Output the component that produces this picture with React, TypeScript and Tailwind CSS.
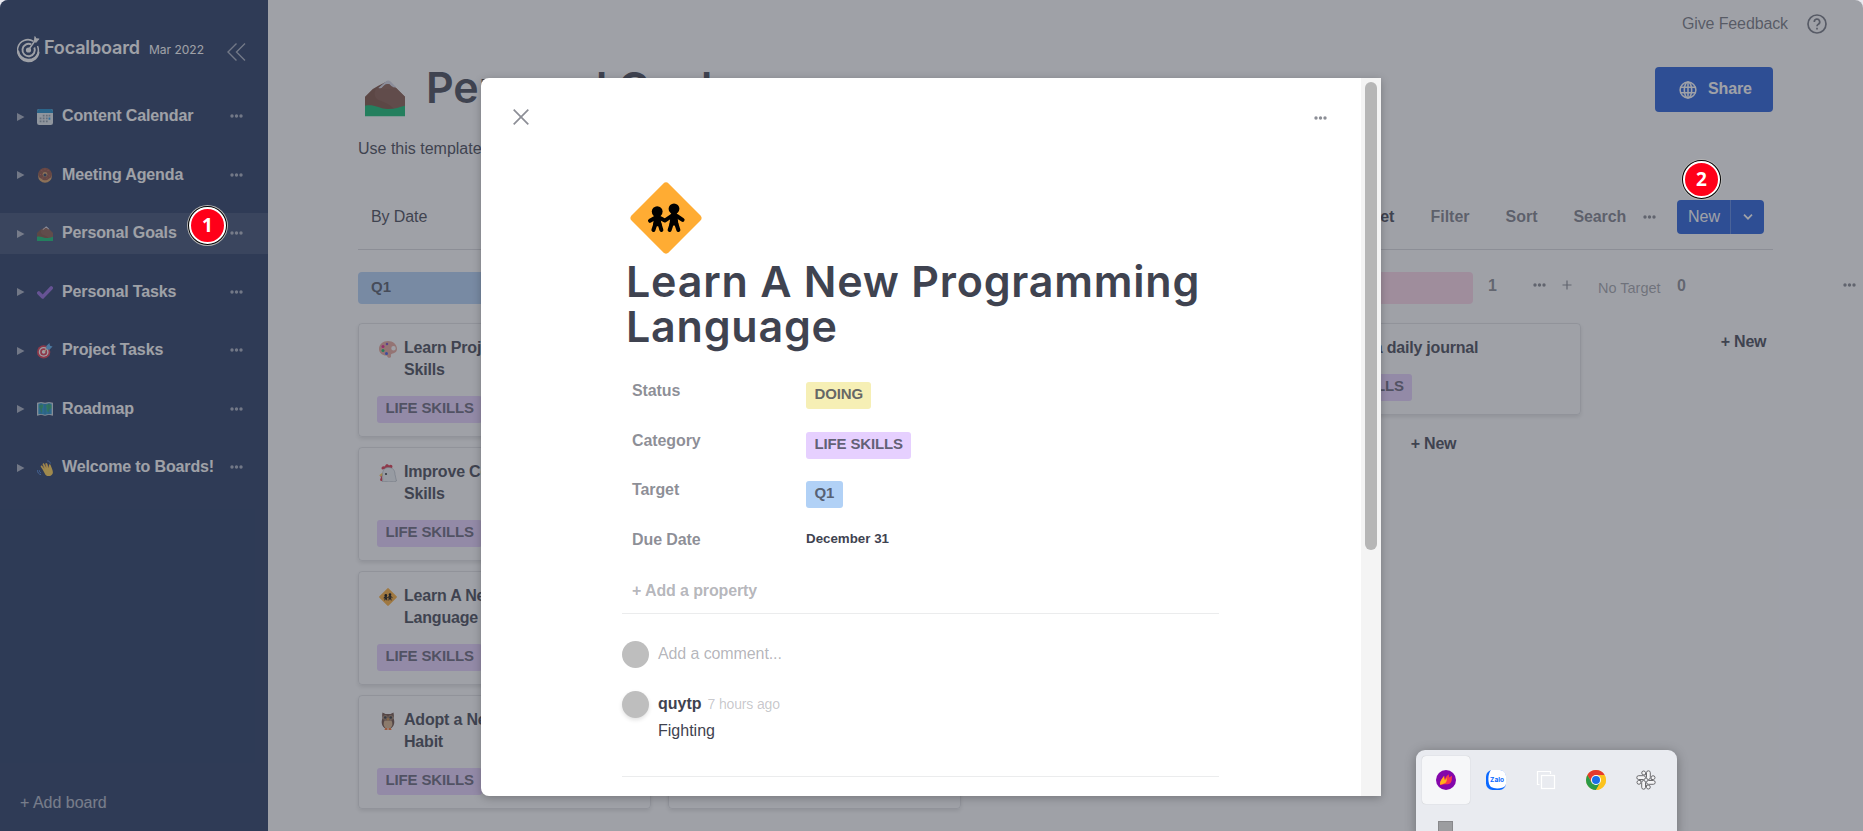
import React from "react";

const people = (
  <g fill="#000" stroke="#000" strokeLinecap="round" strokeLinejoin="round">
    <circle cx="13.600" cy="14.800" r="2.700" stroke="none" />
    <circle cx="22" cy="13.400" r="2.700" stroke="none" />
    <path d="M12.600 17h2l.7 4.600h-3.300z" strokeWidth="1" />
    <path d="M20.900 16h2.200l.6 5.200h-3.500z" strokeWidth="1" />
    <path
      d="M10 19.400l2.600-1.500M15 18l2.400 1.300 3.300-2.200M23.400 17l2.900 1.900M12.700 21l-1 3M14.800 21l.9 3M20.800 21l-1 3M23.200 21l1 3"
      strokeWidth="2"
      fill="none"
    />
  </g>
);

function Emoji({ name, className }: { name: string; className: string }) {
  const art: Record<string, React.ReactNode> = {
    calendar: (
      <>
        <rect width="36" height="36" rx="5" fill="#e1e8ed" />
        <path d="M5 0h26a5 5 0 0 1 5 5v4H0V5a5 5 0 0 1 5-5z" fill="#1787c4" />
        <g fill="#8899a6">
          <path d="M13 13h4v4h-4zM20 13h4v4h-4zM26 13h4v4h-4zM6 19h4v4H6zM13 19h4v4h-4zM20 19h4v4h-4zM6 26h4v4H6zM13 26h4v4h-4zM20 26h4v4h-4z" />
        </g>
        <path d="M26 19h4v5h-4z" fill="#1f97e0" />
      </>
    ),
    donut: (
      <>
        <ellipse cx="18" cy="20" rx="15.500" ry="15.500" fill="#d99e60" />
        <path
          d="M18 1.500a15.500 15.500 0 0 1 15.500 15.500c0 5-3 8-6 9-3 3-6 4-9 4s-7-1-9-4c-4-1-7-5-7-9A15.500 15.500 0 0 1 18 1.500z"
          fill="#8a4b38"
        />
        <circle cx="18" cy="17" r="5.500" fill="#d99e60" />
        <circle cx="18" cy="18" r="3.500" fill="#1e325c" />
        <path d="M10 8l2 1M24 7l2 2M7 17h2M27 19l1 2M12 25l2-1M22 26l1-2M17 5h2" stroke="#e8596e" strokeWidth="1.500" />
      </>
    ),
    mountain: (
      <>
        <path d="M0 16l7-7 5-3 8-4 5 5 3 1 8 8v13H0z" fill="#794b3b" />
        <path d="M10 9c5-3 11-3 17-2l9 9v12H27c-4-5-9-7-15-9-4-3-4-7-2-10z" fill="#87594b" opacity=".7" />
        <path d="M12 8l7-6c1-1 3-.8 4 .2L28 7.500c-2-.4-4 .2-5-1.500-1-2-3-1.500-5 0-2 1.500-3 3-6 2z" fill="#d6d6e4" />
        <path d="M15 8c2-2 3-4 6-3.500 2 .5 2 2 4 2.500v2H15z" fill="#87594b" />
        <path d="M0 24c8-1.500 12 2 18 2.800 7 1 12-1.300 18-2.800v9.500H0z" fill="#08ba6c" />
      </>
    ),
    check: (
      <path d="M4 20l9 9L32 9" fill="none" stroke="#8d63d8" strokeWidth="8" strokeLinecap="round" strokeLinejoin="round" />
    ),
    target: (
      <>
        <circle cx="15" cy="20" r="15" fill="#dd2e44" />
        <circle cx="15" cy="20" r="11" fill="#fff" />
        <circle cx="15" cy="20" r="8" fill="#dd2e44" />
        <circle cx="15" cy="20" r="4" fill="#fff" />
        <path d="M15 20L29 6" stroke="#ffe8b6" strokeWidth="2.500" />
        <path d="M21 14V7l7-7 1 6 6 2-7 7z" fill="#55acee" />
      </>
    ),
    map: (
      <>
        <path d="M0 4l9-2 9 2 9-2 9 2v29l-9-2-9 2-9-2-9 2z" fill="#ccd6dd" />
        <path d="M3 6l6-1 9 2 9-2 6 1v24l-6-1-9 2-9-2-6 1z" fill="#1b8ec8" />
        <path d="M6 9l8-1-1 7-3 3 2 4-2 5-3-9-2-4zM20 10l6-3 6 2v8l-4 1-2 7-4-2v-7z" fill="#23a866" />
        <path d="M9 4v25M18 6v25M27 4v25" stroke="#12688f" strokeWidth="1" />
      </>
    ),
    wave: (
      <>
        <path
          d="M9 20L4.500 13c-1-2 1.500-4 3-2l5 6L9 8c-.8-2.500 2-3.500 3-1.500l5 9-2-9c-.5-2 2.500-3 3.500-.7l4 10.200.5-7c.2-2.300 3.300-2 3.500 0l3.500 9c2 6 3 10-1 14-4.500 4-11 3-14-1z"
          fill="#ffcf4a"
          transform="translate(4 2)"
        />
        <path
          d="M12.500 17L9 8M17 15.500l-2-9M22.500 16l-4-10"
          fill="none"
          stroke="#ef9645"
          strokeWidth="1"
          transform="translate(4 2)"
        />
        <path d="M1 23c0 5 3 9 8 10M5 23c0 3 2 5 4 6M23 2c4 0 6 2 7 6" fill="none" stroke="#4a86e0" strokeWidth="2.200" />
      </>
    ),
    sign: (
      <>
        <rect x="4.900" y="4.900" width="26.200" height="26.200" rx="2" fill="#ffac33" transform="rotate(45 18 18)" />
        {people}
      </>
    ),
    palette: (
      <>
        <path
          d="M18 2C8 2 0 9 0 18c0 8 7 13 14 13 3 0 2 2 4 4 2 1 6 1 6-2s-1-4 1-5 11-2 11-10C36 9 28 2 18 2zm11 19a4.500 4.500 0 1 1 0-9 4.500 4.500 0 0 1 0 9z"
          fill="#e8a598"
          fillRule="evenodd"
        />
        <circle cx="8" cy="13" r="3" fill="#e8178c" />
        <circle cx="16" cy="8" r="2.500" fill="#7a3fc0" />
        <circle cx="8" cy="21" r="3" fill="#14b866" />
        <circle cx="15" cy="27" r="3" fill="#3b56e8" />
      </>
    ),
    chicken: (
      <>
        <path d="M6 11c-3-4 1-8 6-6 1-6 6-5 8-2 4-4 9 0 6 5z" fill="#dd2e44" />
        <path d="M5 22c-3 1-3 3-1 4l-2 6c1 3 5 3 5 0z" fill="#dd2e44" />
        <path d="M0 23l7-6 2 8z" fill="#ffcc4d" />
        <path d="M7 20C8 9 14 7 19 7c9 0 13 6 13 14l3 13-5 2-5-1-5 1-6-1-7 1c1-7 0-10 0-16z" fill="#eef2f5" stroke="#a5adb6" strokeWidth="1.200" />
        <circle cx="14" cy="20" r="2.200" fill="#292f33" />
      </>
    ),
    owl: (
      <>
        <path d="M7 1l6 3h10l6-3c1 6 1 8 0 11 3 8 2 15-4 20H11C5 27 4 20 7 12 6 8 6 5 7 1z" fill="#6b4b3e" />
        <path d="M11 17h14c3 6 2 12-2 15H13c-4-3-5-9-2-15z" fill="#d9b389" />
        <circle cx="12.500" cy="11" r="5" fill="#9c7c62" />
        <circle cx="23.500" cy="11" r="5" fill="#9c7c62" />
        <circle cx="12.500" cy="11" r="2.600" fill="#292f33" />
        <circle cx="23.500" cy="11" r="2.600" fill="#292f33" />
        <path d="M16 13h4l-2 5z" fill="#ffac33" />
        <path d="M12 32h5v4h-6zM19 32h5l1 4h-6z" fill="#f4702c" />
      </>
    ),
  };
  return (
    <svg viewBox="0 0 36 36" className={className}>
      {art[name]}
    </svg>
  );
}

function Dots({ className = "" }: { className?: string }) {
  return (
    <svg viewBox="0 0 13 4" width="13" height="4" className={`shrink-0 ${className}`} fill="currentColor">
      <circle cx="2" cy="2" r="1.700" />
      <circle cx="6.500" cy="2" r="1.700" />
      <circle cx="11" cy="2" r="1.700" />
    </svg>
  );
}

function Plus() {
  return (
    <svg viewBox="0 0 10 10" width="10" height="10" className="shrink-0" stroke="currentColor" strokeWidth="1.200">
      <path d="M5 .5v9M.5 5h9" />
    </svg>
  );
}

function Logo() {
  return (
    <svg viewBox="0 0 24 28" width="24" height="28" className="shrink-0" fill="none" stroke="#fff">
      <path d="M16.500 6.300A10.400 10.400 0 1 0 20.500 11" strokeWidth="1.500" />
      <path d="M1.200 15.500a10.500 10.500 0 0 0 20.600 1.200A9.500 9.500 0 0 1 1.200 15.500z" fill="#fff" strokeWidth="1.600" />
      <path d="M14.200 9.400A6.200 6.200 0 1 0 17.300 12.500" strokeWidth="1.900" />
      <circle cx="11.500" cy="15" r="2.600" fill="#fff" stroke="none" />
      <path d="M11.500 15L18.500 5" strokeWidth="1.500" />
      <path d="M17.300 5.800L17.900 1.500l1.300 2.200 2.900.2-3.200 3.700z" fill="#fff" strokeWidth=".8" />
    </svg>
  );
}

const boards = [
  ["calendar", "Content Calendar"],
  ["donut", "Meeting Agenda"],
  ["mountain", "Personal Goals"],
  ["check", "Personal Tasks"],
  ["target", "Project Tasks"],
  ["map", "Roadmap"],
  ["wave", "Welcome to Boards!"],
];

function Sidebar() {
  return (
    <aside className="flex h-full w-[268px] shrink-0 flex-col bg-[#1e325c] text-white">
      <div className="flex h-24 items-start pl-[17px] pt-[35px]">
        <Logo />
        <span className="ml-[3px] w-[97px] font-['Inter',sans-serif] text-[18px] font-semibold leading-[26px] tracking-[-0.15px]">
          Focalboard
        </span>
        <span className="ml-2 w-[60px] whitespace-nowrap font-['Inter',sans-serif] text-[12px] leading-[29px]">
          Mar 2022
        </span>
        <svg viewBox="0 0 20 18" width="20" height="18" className="ml-[18px] mt-2 opacity-60" fill="none" stroke="#fff" strokeWidth="1.400">
          <path d="M9.500 .5L1 9l8.500 8.500M18 .5L9.500 9l8.500 8.500" />
        </svg>
      </div>
      <nav className="flex flex-col gap-[17.5px]">
        {boards.map(([icon, name]) => (
          <div
            key={name}
            className={
              name === "Personal Goals"
                ? "flex h-[41px] items-center bg-white/10 pl-[17px] pr-[25px]"
                : "flex h-[41px] items-center pl-[17px] pr-[25px]"
            }
          >
            <svg viewBox="0 0 8 8" width="8" height="8" className="mr-3 shrink-0 opacity-60" fill="#fff">
              <path d="M0 0l7.500 4L0 8z" />
            </svg>
            <Emoji name={icon} className="mr-[9px] size-4 shrink-0" />
            <span className="mb-px whitespace-nowrap text-[16px] font-bold leading-6 tracking-[-0.13px]">{name}</span>
            <Dots className="mb-px ml-auto opacity-60" />
          </div>
        ))}
      </nav>
      <div className="mb-4 mt-auto pl-5 text-[16px] leading-6 text-white/65">+ Add board</div>
    </aside>
  );
}

function Chip({ children, color }: { children: React.ReactNode; color: string }) {
  return (
    <span
      className={`inline-flex h-[27px] w-fit items-center whitespace-nowrap rounded-[3px] px-[8.5px] pb-0.5 text-[15px] font-bold tracking-[-0.15px] text-[#3f4350]/80 ${color}`}
    >
      {children}
    </span>
  );
}

function Card({ icon, lines }: { icon: string; lines: string[] }) {
  return (
    <div className="flex flex-col rounded-[4px] border border-[#3f4350]/15 px-[18px] pb-[13px] pt-[13px] shadow-[0_2px_4px_rgba(0,0,0,0.12)]">
      <div className="flex">
        <Emoji name={icon} className="ml-0.5 mt-[3px] size-[18px] shrink-0" />
        <div className="ml-[7px] text-[16px] font-bold leading-[22px] tracking-[-0.2px]">
          {lines.map((l) => (
            <div key={l} className="whitespace-nowrap">
              {l}
            </div>
          ))}
        </div>
      </div>
      <div className="mt-[15px] flex">
        <Chip color="bg-[#e6d0ff]">LIFE SKILLS</Chip>
      </div>
    </div>
  );
}

function Column({
  title,
  color,
  count,
  cards,
}: {
  title: string;
  color?: string;
  count: number;
  cards: { icon: string; lines: string[] }[];
}) {
  return (
    <div className="w-[293px] shrink-0">
      <div className="flex h-8 text-[#3f4350]/65">
        {color ? (
          <div className={`w-[185px] rounded-[4px] pl-[13px] text-[15px] font-bold leading-[30px] text-[#3f4350]/90 ${color}`}>
            {title}
          </div>
        ) : (
          <div className="w-[64px] whitespace-nowrap text-[14.500px] leading-[33px] text-[#3f4350]/50">{title}</div>
        )}
        <div className="ml-[15px] text-[16px] font-bold leading-[27px]">{count}</div>
        <div className="ml-auto flex h-[26px] items-center gap-[16px] pr-[9px]">
          <Dots />
          <Plus />
        </div>
      </div>
      <div className="mt-[19px] flex flex-col gap-[10px]">
        {cards.map((c, i) => (
          <Card key={i} {...c} />
        ))}
        <div className="mt-[7px] pr-0.5 text-center text-[16px] font-bold leading-6 tracking-[-0.2px]">+ New</div>
      </div>
    </div>
  );
}

function Board() {
  return (
    <main className="flex min-w-0 flex-1 flex-col overflow-hidden bg-white pl-[90px]">
      <div className="flex h-12 shrink-0 items-center justify-end pr-9 text-[#3f4350]/75">
        <span className="text-[16px] tracking-[-0.12px]">Give Feedback</span>
        <svg viewBox="0 0 20 20" width="20" height="20" className="ml-[19px]" fill="none" stroke="currentColor" strokeWidth="1.700">
          <circle cx="10" cy="10" r="9" />
          <path d="M7.300 7.900a2.700 2.700 0 1 1 4 2.300c-.9.5-1.300 1-1.300 2" />
          <path d="M10 13.700v1.800" />
        </svg>
      </div>
      <div className="mt-[19px] flex h-[60px] w-[1415px] shrink-0">
        <Emoji name="mountain" className="ml-[7px] mt-3 size-10" />
        <h1 className="ml-[21px] mt-[-5px] whitespace-nowrap font-['Inter',sans-serif] text-[43px] font-semibold leading-[50px] tracking-[-0.1px]">
          Personal Goals
        </h1>
        <div className="ml-auto flex h-[45px] w-[118px] items-center rounded-[4px] bg-[#1c58d9] pl-6 font-bold text-white">
          <svg viewBox="0 0 18 18" width="18" height="18" fill="none" stroke="currentColor" strokeWidth="1.500">
            <circle cx="9" cy="9" r="7.900" />
            <ellipse cx="9" cy="9" rx="3.700" ry="7.900" />
            <path d="M1.500 6.300h15M1.500 11.700h15M9 1v16" />
          </svg>
          <span className="mb-0.5 ml-[11px] text-[16px] tracking-[-0.15px]">Share</span>
        </div>
      </div>
      <p className="mt-[10px] shrink-0 whitespace-nowrap text-[16px] leading-6">
        Use this template to set goals and accomplish new things!
      </p>
      <div className="mt-8 flex h-[57px] w-[1415px] shrink-0 items-start border-b border-[#3f4350]/20 pl-[13px] pr-[9px] pt-[7px] text-[16px] leading-[34px]">
        <span className="leading-[33px] tracking-[-0.1px]">By Date</span>
        <div className="ml-auto flex gap-9 font-bold leading-[33px] text-[#3f4350]/70">
          <span>
            Group by: <span className="text-[#3f4350]">Target</span>
          </span>
          <span>Filter</span>
          <span>Sort</span>
          <span className="tracking-[-0.15px]">Search</span>
        </div>
        <Dots className="ml-[17px] mt-[15px] text-[#3f4350]/65" />
        <div className="ml-[21px] flex h-[34px] w-[87px] rounded-[4px] bg-[#1c58d9] text-white">
          <span className="w-[54px] border-r border-white/25 pl-[11px]">New</span>
          <svg viewBox="0 0 10 6" width="10" height="6" className="ml-3 mt-[14px]" fill="none" stroke="currentColor" strokeWidth="1.700">
            <path d="M1 .7l4 4 4-4" />
          </svg>
        </div>
      </div>
      <div className="mt-[22px] flex gap-[17px]">
        <Column
          title="Q1"
          color="bg-[#b1d1f6]"
          count={4}
          cards={[
            { icon: "palette", lines: ["Learn Project Management", "Skills"] },
            { icon: "chicken", lines: ["Improve Communication", "Skills"] },
            { icon: "sign", lines: ["Learn A New Programming", "Language"] },
            { icon: "owl", lines: ["Adopt a New Healthy", "Habit"] },
          ]}
        />
        <Column
          title="Q2"
          color="bg-[#f7f0b6]"
          count={4}
          cards={[
            { icon: "target", lines: ["Run a 5K before", "summer"] },
            { icon: "map", lines: ["Plan a trip with", "friends"] },
            { icon: "palette", lines: ["Learn to paint", "landscapes"] },
            { icon: "check", lines: ["Organize the", "workspace"] },
          ]}
        />
        <Column title="Q3" color="bg-[#d1f4e0]" count={0} cards={[]} />
        <Column title="Q4" color="bg-[#ffd6e9]" count={1} cards={[{ icon: "check", lines: ["Start a daily journal"] }]} />
        <Column title="No Target" count={0} cards={[]} />
      </div>
    </main>
  );
}

function Property({ label, children, className }: { label: string; children: React.ReactNode; className: string }) {
  return (
    <div className={`flex items-start ${className}`}>
      <span className="w-[174px] text-[16px] font-bold leading-[17px] tracking-[-0.1px] text-[#3f4350]/60">{label}</span>
      {children}
    </div>
  );
}

function CardDialog() {
  return (
    <div className="flex h-[718px] w-[900px] overflow-hidden rounded-l-[8px] bg-white shadow-[0_2px_8px_rgba(0,0,0,0.25)]">
      <div className="flex-1">
        <div className="flex h-[104px] items-start justify-between pl-8 pr-[34px] pt-[31px] text-[#3f4350]/60">
          <svg viewBox="0 0 16 16" width="16" height="16" fill="none" stroke="currentColor" strokeWidth="1.700">
            <path d="M.7 .7l14.600 14.600M15.300 .7L.7 15.300" />
          </svg>
          <Dots className="mt-[7px]" />
        </div>
        <div className="ml-[141px] w-[597px]">
          <Emoji name="sign" className="ml-2 size-[72px]" />
          <h2 className="ml-[4px] mt-[5px] whitespace-nowrap font-['Inter',sans-serif] text-[43px] font-semibold leading-[45px] tracking-[0.78px]">
            Learn A New Programming
            <br />
            Language
          </h2>
          <div className="pl-[10px]">
            <Property label="Status" className="mt-[33px] h-[50px]">
              <Chip color="bg-[#f6efb5]">DOING</Chip>
            </Property>
            <Property label="Category" className="h-[49px]">
              <Chip color="bg-[#e6d0ff]">LIFE SKILLS</Chip>
            </Property>
            <Property label="Target" className="h-[50px]">
              <Chip color="bg-[#b1d1f6]">Q1</Chip>
            </Property>
            <Property label="Due Date" className="h-[51px]">
              <span className="text-[13.333px] font-bold leading-[15px]">December 31</span>
            </Property>
            <div className="h-[31px] text-[16px] font-bold leading-[18px] tracking-[-0.12px] text-[#3f4350]/40">+ Add a property</div>
          </div>
          <div className="border-t border-[#3f4350]/10" />
          <div className="mt-[27px] flex items-center">
            <div className="size-[27px] rounded-full bg-[#bebebe]" />
            <span className="mb-px ml-[9px] text-[16px] tracking-[-0.1px] text-[#3f4350]/40">Add a comment...</span>
          </div>
          <div className="mt-[23px] flex items-center">
            <div className="size-[27px] rounded-full bg-[#bebebe] shadow-[0_2px_4px_rgba(0,0,0,0.12)]" />
            <span className="mb-px ml-[9px] text-[16px] font-bold">quytp</span>
            <span className="mb-px ml-[6px] text-[14px] tracking-[-0.15px] text-[#3f4350]/30">7 hours ago</span>
          </div>
          <div className="ml-9 mt-px text-[16px] leading-6">Fighting</div>
          <div className="mt-[33px] border-t border-[#3f4350]/10" />
        </div>
      </div>
      <div className="w-5 bg-[#f4f4f4] pl-1 pt-1">
        <div className="h-[468px] w-3 rounded-full bg-[#b6b6b6]" />
      </div>
    </div>
  );
}

function Marker({ n }: { n: number }) {
  return (
    <div className="flex size-[41px] items-center justify-center rounded-full border border-white/70 bg-black p-px">
      <div className="flex size-full items-center justify-center rounded-full border-2 border-white bg-[#ff0019] font-['Noto_Sans','Open_Sans',sans-serif] text-[19px] font-bold text-white">
        {n}
      </div>
    </div>
  );
}

function TrayPopup() {
  return (
    <div className="h-[90px] w-[261px] rounded-[9px] bg-[#e9ebf0] p-1.5 shadow-[0_2px_12px_rgba(0,0,0,0.3)]">
      <div className="flex gap-0.5">
        <div className="flex size-12 items-center justify-center rounded-[4px] bg-[#f6f7f9] shadow-[0_0_1px_rgba(0,0,0,0.25)]">
          <svg viewBox="0 0 20 20" width="20" height="20">
            <circle cx="10" cy="10" r="10" fill="#8406ab" />
            <path
              d="M4.300 15C3.300 11.500 5.500 9.500 8.200 5.800c0 1.500.3 2.300.9 3C9.700 7 11 5.500 12.800 4.200c0 1.600.2 2.600.8 3.400.7-.9 1.500-1.500 2.500-1.900-.6 3 .3 5-1.700 7.300-2 2-4.900 1-6.400 1.300-1.500.2-2.500 1-3.700.7z"
              fill="#f7374f"
            />
            <path d="M4.300 15c-.8-3.500 1.400-5.500 3.900-9.200-.2 2 0 3.400.7 4.400.9-.8 1.400-1.700 1.700-2.700.5 2.500.2 4.300-1.300 5.500-1.500 1-3.400.9-5 2z" fill="#ffb31a" />
          </svg>
        </div>
        <div className="flex size-12 items-center justify-center">
          <svg viewBox="0 0 20 20" width="20" height="20">
            <rect width="20" height="20" rx="6.500" fill="#0a68ff" />
            <path d="M5 0h9a6 6 0 0 1 6 6v8a4 4 0 0 1-3 3.600c-5 1.400-9 1-12-.6C1.500 14 1.500 4 5 0z" fill="#fff" />
            <text x="11" y="11.800" textAnchor="middle" fontSize="6.500" fontWeight="700" fill="#0a68ff" fontFamily="Inter, sans-serif">
              Zalo
            </text>
          </svg>
        </div>
        <div className="flex size-12 items-center justify-center">
          <svg viewBox="0 0 20 20" width="20" height="20" fill="none" stroke="#fff" strokeWidth="1.200">
            <path d="M3.500 14.500H1.500v-13h13v2.500" />
            <rect x="5.500" y="5.500" width="13" height="13" />
          </svg>
        </div>
        <div className="flex size-12 items-center justify-center">
          <svg viewBox="0 0 20 20" width="20" height="20">
            <circle cx="10" cy="10" r="10" fill="#fcc31e" />
            <path d="M10 5h8.660A10 10 0 0 0 1.340 5l4.330 7.500z" fill="#e53a2e" />
            <path d="M1.340 5A10 10 0 0 0 10 20l4.330-7.500H5.670z" fill="#2a9a48" />
            <path d="M18.660 5A10 10 0 0 1 10 20l4.330-7.500L10 5z" fill="#fcc31e" />
            <circle cx="10" cy="10" r="5" fill="#fff" />
            <circle cx="10" cy="10" r="4" fill="#1a6fe8" />
          </svg>
        </div>
        <div className="flex size-12 items-center justify-center">
          <svg viewBox="0 0 20 20" width="20" height="20" fill="#f4f4f6" stroke="#5c5c60" strokeWidth=".9">
            <path d="M9.500 4.800V2.600a1.900 1.900 0 1 0-1.900 2.200z" />
            <path d="M15.200 9.500h2.200a1.900 1.900 0 1 0-2.200-1.900z" />
            <path d="M10.500 15.200v2.200a1.900 1.900 0 1 0 1.900-2.200z" />
            <path d="M4.800 10.500H2.600a1.900 1.900 0 1 0 2.200 1.900z" />
            <rect x=".8" y="5.700" width="8.700" height="3.800" rx="1.900" />
            <rect x="10.500" y=".8" width="3.800" height="8.700" rx="1.900" />
            <rect x="10.500" y="10.500" width="8.700" height="3.800" rx="1.900" />
            <rect x="5.700" y="10.500" width="3.800" height="8.700" rx="1.900" />
          </svg>
        </div>
      </div>
      <div className="ml-4 mt-[17px] h-3 w-[15px] border border-b-0 border-[#88888b] bg-[#9c9da0]" />
    </div>
  );
}

export default function App() {
  return (
    <div className="relative h-[831px] w-[1863px] overflow-hidden bg-[#e9e9ef] font-['Liberation_Sans',Arial,sans-serif] text-[#3f4350]">
      <div className="relative flex h-full overflow-hidden rounded-t-[8px]">
        <Sidebar />
        <Board />
        <div className="absolute inset-0 flex items-start bg-[#3f4350]/50 pl-[481px] pt-[78px]">
          <CardDialog />
        </div>
      </div>
      <div className="absolute left-[187px] top-[205px]">
        <Marker n={1} />
      </div>
      <div className="absolute left-[1681px] top-[159px]">
        <Marker n={2} />
      </div>
      <div className="absolute left-[1416px] top-[750px]">
        <TrayPopup />
      </div>
    </div>
  );
}
